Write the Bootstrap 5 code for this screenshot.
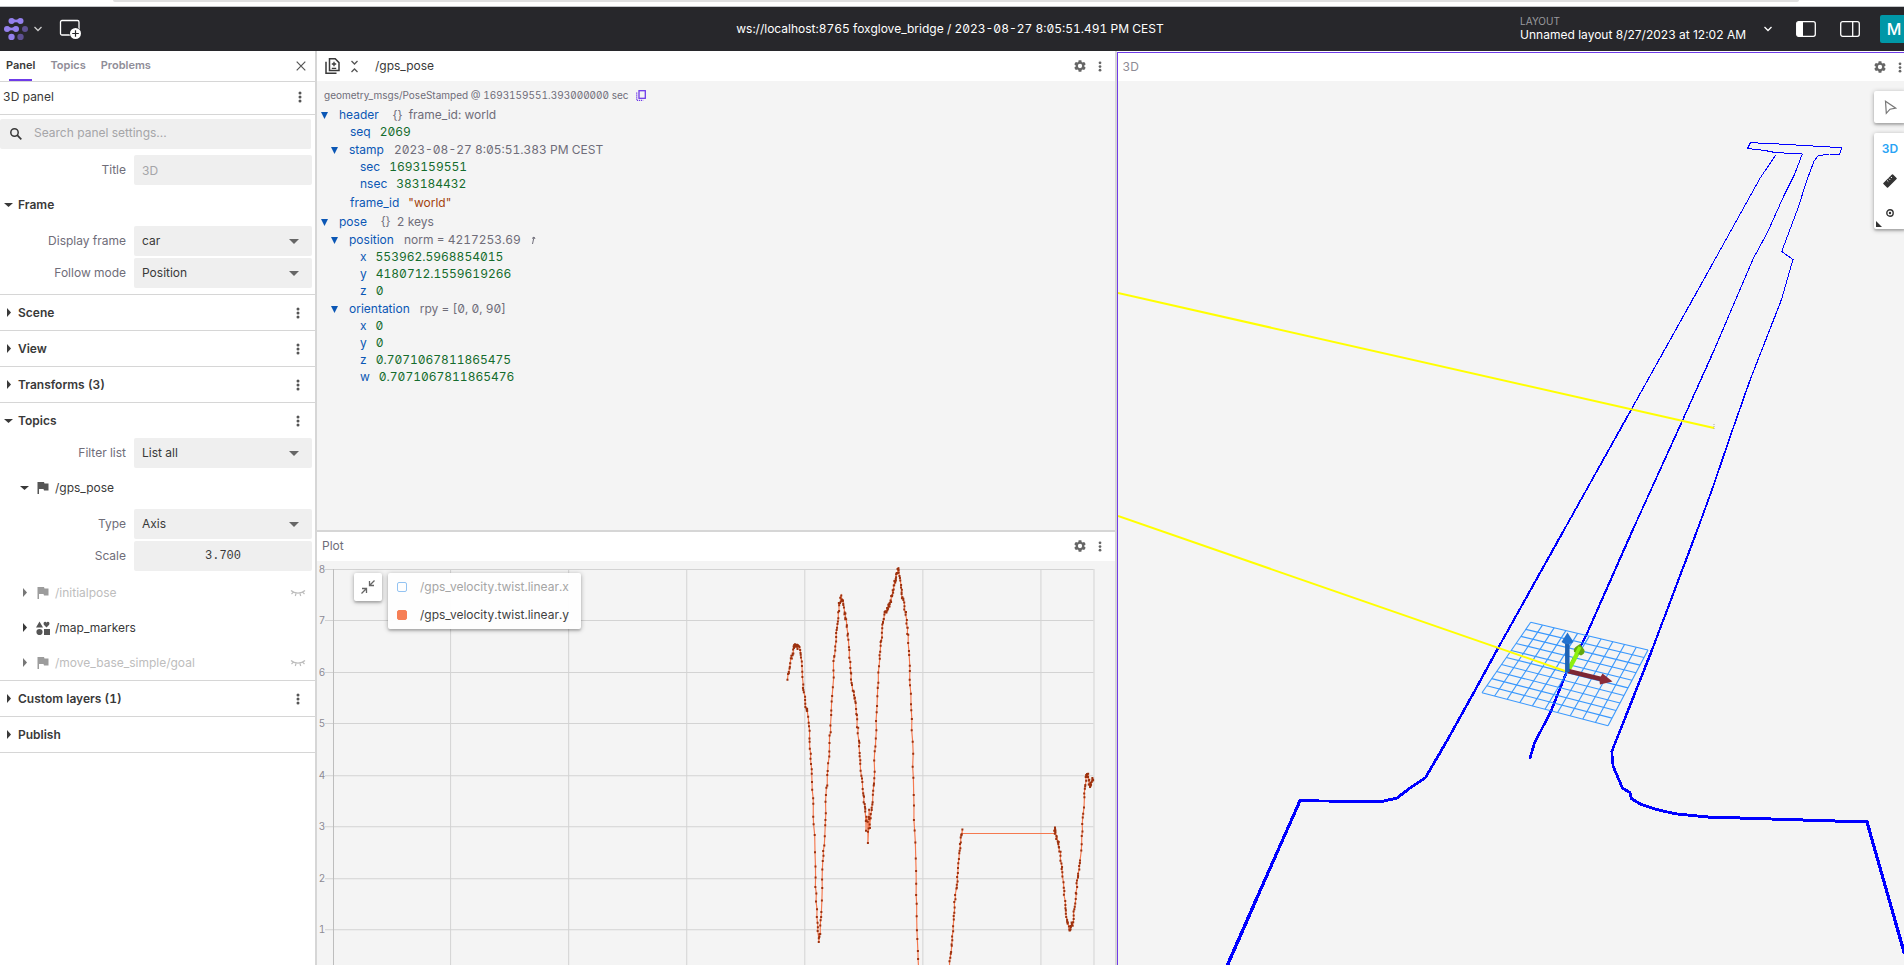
<!DOCTYPE html>
<html lang="en">
<head>
<meta charset="utf-8">
<meta name="viewport" content="width=device-width, initial-scale=1">
<title>Foxglove Studio</title>
<link href="https://cdn.jsdelivr.net/npm/bootstrap@5.3.0/dist/css/bootstrap.min.css" rel="stylesheet">
<style>
  :root { --line: #d6d6d6; --ink: #393939; --dim: #6f6d79; --field: #efefef; --canvas: #f4f4f4; --brand: #6f3be8; }
  html, body { height: 100%; }
  body { font-family: Inter, "Noto Sans", sans-serif; font-size: 12px; line-height: 16px; color: var(--ink); background: #fff; overflow: hidden; font-feature-settings: "cv08", "cv10", "tnum"; }
  svg { display: block; flex: none; }
  button { color: inherit; background: none; border: 0; padding: 0; }
  .zeros { font-feature-settings: "cv08", "cv10", "tnum", "zero"; }
  .fit { min-height: 0; }

  .browser-edge { height: 7px; border-bottom: 1px solid #c4c6c9; padding: 0 105px 0 113px; }
  .browser-edge div { height: 2px; background: #e0e0e0; border-radius: 0 0 6px 6px; }
  .app-header { height: 44px; background: #27272b; color: #fff; padding-right: 4px; overflow: hidden; }
  .app-header .side { flex: 1 1 0; }
  .app-menu { gap: 6px; }
  .layout-caption { font-size: 10px; line-height: 12px; color: #9a9a9e; }
  .layout-pick { gap: 18px; }
  .avatar { width: 28px; height: 28px; margin: 0 -8px 0 20px; background: #0097a7; border-radius: 2px; font-size: 16px; font-weight: 500; }

  .sidebar { width: 317px; border-right: 2px solid var(--line); }
  .side-tabs { height: 31px; border-bottom: 1px solid var(--line); padding: 0 9px 0 6px; gap: 15px; }
  .side-tabs .tab { position: relative; height: 30px; font-size: 11px; font-weight: 600; color: #8f8d98; padding-bottom: 2px; }
  .side-tabs .tab.active { color: var(--ink); }
  .side-tabs .tab.active::after { content: ""; position: absolute; left: 3px; right: 3px; bottom: 0; height: 2px; background: var(--brand); }
  .panel-name { height: 33px; border-bottom: 1px solid var(--line); padding: 0 13px 2px 3px; }
  .dots { color: #555; }
  .field { height: 30px; background-color: var(--field); border: 0; border-radius: 2px; padding: 0 8px; font-size: 12px; line-height: 16px; color: var(--ink); box-shadow: none; }
  .field::placeholder { color: #a5a5a8; opacity: 1; }
  select.field { background: var(--field) url("data:image/svg+xml,%3Csvg xmlns='http://www.w3.org/2000/svg' viewBox='0 0 10 5'%3E%3Cpath fill='%23666' d='M0 0h10L5 5z'/%3E%3C/svg%3E") no-repeat right 13px center / 10px 5px; }
  .field.scale { font-family: "Liberation Mono", monospace; }
  .search { margin: 4px 4px 6px 0; background: var(--field); border-radius: 2px; padding-left: 10px; }
  .search .field { padding-bottom: 3px; }
  .setting { padding-right: 3px; margin-bottom: 2px; gap: 8px; }
  .setting label { width: 126px; text-align: right; color: var(--dim); padding-bottom: 1px; }
  .section { border-bottom: 1px solid var(--line); }
  .section-head { height: 35px; padding: 0 15px 0 4px; gap: 5px; font-weight: 600; }
  .section-head.section { height: 36px; }
  .topic { height: 35px; padding: 0 9px 0 20px; gap: 5px; }
  .topic .ico { width: 14px; margin: 0 0 0 2px; color: #555; }
  .topic.off { color: #bdbdbd; }
  .topic.off .caret { color: #777; }
  .topic.off .ico { color: #9c9c9c; }

  .col-mid { flex: 800 1 0; border-right: 2px solid var(--line); min-width: 0; }
  .col-view { flex: 787 1 0; min-width: 0; margin-top: 1px; border: 1px solid var(--brand); border-width: 1px 0 0 1px; }
  .pane-bar { background: #fff; height: 30px; padding: 0 13px 0 8px; }
  .pane-bar.plot-bar { height: 29px; padding-left: 5px; color: var(--dim); }
  .pane-bar.view-bar { height: 28px; padding: 0 2px 0 4px; color: #8d8b95; }
  .pane-bar .tools { color: #666; gap: 12px; }
  .collapse-all { margin-left: 11px; }
  .pane-topic { margin-left: 17px; }
  .raw { flex: 479 1 0; background: var(--canvas); border-bottom: 2px solid var(--line); overflow: hidden; }
  .plot { flex: 433 1 0; background: var(--canvas); overflow: hidden; }
  .canvas3d { background: var(--canvas); }
  .schema { font-size: 10px; line-height: 16px; padding: 6px 7px 3px; color: var(--dim); gap: 7px; }
  .tree ul { list-style: none; margin: 0; padding-left: 10px; }
  .tree > ul { padding: 0; }
  .tree .node { height: 18px; padding-left: 4px; gap: 10px; color: var(--dim); }
  .tree .twist { margin-right: 1px; color: #0b57b5; }
  .tree .leaf { height: 17px; padding: 0 0 2px 23px; gap: 9px; }
  .tree .leaf.tall { height: 20px; padding-bottom: 1px; }
  .tree .k { color: #0b57b5; }
  .tree .v { color: #156c2d; }
  .tree .s { color: #a3430d; }

  .floating { background: #fff; border-radius: 2px; box-shadow: 0 1px 5px rgba(0,0,0,.3), 0 2px 2px rgba(0,0,0,.14); }
  .legend-wrap { position: absolute; top: 12px; left: 37px; gap: 6px; }
  .legend-wrap button { width: 28px; height: 28px; color: #666; }
  .legend { opacity: .96; }
  .legend .item { height: 28px; padding: 0 12px 0 9px; gap: 13px; }
  .legend .item.off { color: #a2a2a2; }
  .swatch { width: 10px; height: 10px; border: 1px solid #90c2f2; border-radius: 2px; }
  .swatch.on { background: #f77b50; border-color: #f77b50; }
  .axis-text { font-size: 10px; fill: #8d8b95; }
  .view-tools { position: absolute; top: 10px; right: -2px; gap: 10px; }
  .view-tools button { width: 32px; height: 32px; display: flex; align-items: center; justify-content: center; }
  .view-tools .mode { color: #29a3f5; font-weight: 600; }
  .more { position: absolute; left: 2px; bottom: 2px; }
</style>
</head>
<body class="d-flex flex-column">
<svg width="0" height="0" class="position-absolute" aria-hidden="true">
  <symbol id="kebab" viewBox="0 0 4 12"><circle cx="2" cy="2" r="1.5" fill="currentColor"/><circle cx="2" cy="6" r="1.5" fill="currentColor"/><circle cx="2" cy="10" r="1.5" fill="currentColor"/></symbol>
  <symbol id="right" viewBox="0 0 9 9"><path d="M3 0v9l4-4.500z" fill="currentColor"/></symbol>
  <symbol id="down" viewBox="0 0 9 9"><path d="M0 3h9L4.500 7z" fill="currentColor"/></symbol>
  <symbol id="tri" viewBox="0 0 7 8"><path d="M0 1h7L3.500 8z" fill="currentColor"/></symbol>
  <symbol id="flag" viewBox="0 0 14 14"><path d="M1.500 1H8l.5 1.500h4V9.500H8L7.500 8H3v5H1.500z" fill="currentColor"/></symbol>
  <symbol id="shapes" viewBox="0 0 14 14"><path d="M3.500 0.500 7 6.500H0zM10.500 6.500 7.800 3.700Q7 2 8.300 1.100 9.800.4 10.500 1.800 11.200.4 12.800 1.100 14 2 13.200 3.700zM8 8h6v6H8z" fill="currentColor"/><circle cx="3.500" cy="11" r="3.100" fill="currentColor"/></symbol>
  <symbol id="eye" viewBox="0 0 16 8"><path d="M1 1.500c3.500 3.500 10.500 3.500 14 0M3.200 3.300 1.500 5M6 4.500 5.300 7M10 4.500l.7 2.500M12.800 3.300 14.500 5" fill="none" stroke="currentColor" stroke-width="1.200"/></symbol>
  <symbol id="gear" viewBox="2 2 20 20"><path fill="currentColor" d="M19.140 12.940c.04-.3.06-.61.06-.94 0-.32-.02-.64-.07-.94l2.030-1.580c.18-.14.23-.41.12-.61l-1.920-3.320c-.12-.22-.37-.29-.59-.22l-2.390.96c-.5-.38-1.030-.7-1.620-.94l-.36-2.540c-.04-.24-.24-.41-.48-.41h-3.840c-.24 0-.43.17-.47.41l-.36 2.540c-.59.24-1.130.57-1.620.94l-2.390-.96c-.22-.08-.47 0-.59.22L2.740 8.870c-.12.21-.08.47.12.61l2.030 1.580c-.05.3-.09.63-.09.94s.02.64.07.94l-2.030 1.580c-.18.14-.23.41-.12.61l1.920 3.320c.12.22.37.29.59.22l2.390-.96c.5.38 1.030.7 1.620.94l.36 2.540c.05.24.24.41.48.41h3.840c.24 0 .44-.17.47-.41l.36-2.540c.59-.24 1.130-.56 1.620-.94l2.390.96c.22.08.47 0 .59-.22l1.920-3.320c.12-.22.07-.47-.12-.61zM12 15.600a3.600 3.600 0 1 1 0-7.200 3.600 3.600 0 0 1 0 7.200z"/></symbol>
</svg>

<div class="browser-edge flex-shrink-0"><div></div></div>

<header class="app-header d-flex align-items-center flex-shrink-0">
  <div class="side d-flex align-items-center">
    <button class="app-menu d-flex align-items-center ms-1" type="button" aria-label="Menu">
      <svg width="24" height="22" viewBox="0 0 24 22">
        <g fill="#9480ed"><circle cx="7.500" cy="3" r="3"/><circle cx="16.500" cy="3" r="3"/><path d="M8 .3Q12 3 16 .3V5.700Q12 3 8 5.700z"/><circle cx="3" cy="11" r="3"/><circle cx="12" cy="11" r="3"/><path d="M3.500 8.300Q7.500 11 11.500 8.300V13.700Q7.500 11 3.500 13.700z"/><circle cx="7.500" cy="19" r="3.200"/></g>
        <g fill="#5e5092"><circle cx="21" cy="11" r="3"/><circle cx="16.500" cy="19" r="3.200"/></g>
      </svg>
      <svg width="8" height="6" viewBox="0 0 8 6"><path d="M.5 1 4 4.500 7.500 1" fill="none" stroke="#ccc" stroke-width="1.300"/></svg>
    </button>
    <button class="ms-3" type="button" aria-label="Add panel">
      <svg width="24" height="22" viewBox="0 0 24 22"><rect x="2.500" y="2.500" width="18.500" height="14.500" rx="1.500" fill="none" stroke="#fff" stroke-width="1.300"/><circle cx="17.500" cy="15.500" r="6" fill="#27272b"/><circle cx="17.500" cy="15.500" r="5.500" fill="#fff"/><path d="M17.500 12.200v6.600M14.200 15.500h6.600" stroke="#27272b" stroke-width="1.200"/></svg>
    </button>
  </div>
  <div class="zeros text-nowrap">ws://localhost:8765 foxglove_bridge / 2023-08-27 8:05:51.491 PM CEST</div>
  <div class="side d-flex align-items-center justify-content-end">
    <button class="layout-pick d-flex align-items-center text-start me-4" type="button">
      <span><span class="layout-caption d-block">LAYOUT</span><span class="d-block text-nowrap">Unnamed layout 8/27/2023 at 12:02 AM</span></span>
      <svg width="8" height="6" viewBox="0 0 8 6"><path d="M.5 1 4 4.500 7.500 1" fill="none" stroke="#fff" stroke-width="1.300"/></svg>
    </button>
    <button class="me-4" type="button" aria-label="Left sidebar"><svg width="20" height="16" viewBox="0 0 20 16"><rect x=".7" y=".7" width="18.600" height="14.600" rx="2" fill="none" stroke="#fff" stroke-width="1.300"/><path d="M2 .7h5v14.600H2L.7 14V2z" fill="#fff"/></svg></button>
    <button type="button" aria-label="Right sidebar"><svg width="20" height="16" viewBox="0 0 20 16"><rect x=".7" y=".7" width="18.600" height="14.600" rx="2" fill="none" stroke="#fff" stroke-width="1.300"/><path d="M12.700 1v14" stroke="#fff" stroke-width="1.300"/></svg></button>
    <button class="avatar" type="button">M</button>
  </div>
</header>

<main class="fit d-flex flex-fill">
  <aside class="sidebar flex-shrink-0">
    <div class="side-tabs d-flex align-items-center">
      <button class="tab active" type="button">Panel</button>
      <button class="tab" type="button">Topics</button>
      <button class="tab" type="button">Problems</button>
      <button class="ms-auto" type="button" aria-label="Close"><svg width="10" height="10" viewBox="0 0 10 10"><path d="M.7.7l8.600 8.600M9.300.7.7 9.300" stroke="#555" stroke-width="1.200"/></svg></button>
    </div>
    <div class="panel-name d-flex align-items-center justify-content-between">
      <span>3D panel</span>
      <button class="dots" type="button" aria-label="Panel menu"><svg width="4" height="12"><use href="#kebab"/></svg></button>
    </div>
    <div class="search d-flex align-items-center">
      <svg width="12" height="12" viewBox="0 0 12 12"><circle cx="4.500" cy="4.500" r="3.700" fill="none" stroke="#393939" stroke-width="1.500"/><path d="M7.200 7.200 11.300 11.300" stroke="#393939" stroke-width="1.700"/></svg>
      <input class="field form-control ps-2 ms-1" type="text" aria-label="Search panel settings" placeholder="Search panel settings...">
    </div>
    <div class="setting d-flex align-items-center"><label class="flex-shrink-0" for="f-title">Title</label><input id="f-title" class="field form-control" type="text" placeholder="3D"></div>

    <section class="section pb-1">
      <div class="section-head d-flex align-items-center mb-1"><svg width="9" height="9"><use href="#down"/></svg>Frame</div>
      <div class="setting d-flex align-items-center"><label class="flex-shrink-0" for="f-frame">Display frame</label><select id="f-frame" class="field form-select"><option>car</option></select></div>
      <div class="setting d-flex align-items-center"><label class="flex-shrink-0" for="f-follow">Follow mode</label><select id="f-follow" class="field form-select"><option>Position</option></select></div>
    </section>
    <section class="section section-head d-flex align-items-center"><svg width="9" height="9"><use href="#right"/></svg>Scene<button class="dots ms-auto" type="button" aria-label="Scene menu"><svg width="4" height="12"><use href="#kebab"/></svg></button></section>
    <section class="section section-head d-flex align-items-center"><svg width="9" height="9"><use href="#right"/></svg>View<button class="dots ms-auto" type="button" aria-label="View menu"><svg width="4" height="12"><use href="#kebab"/></svg></button></section>
    <section class="section section-head d-flex align-items-center"><svg width="9" height="9"><use href="#right"/></svg>Transforms (3)<button class="dots ms-auto" type="button" aria-label="Transforms menu"><svg width="4" height="12"><use href="#kebab"/></svg></button></section>
    <section class="section">
      <div class="section-head d-flex align-items-center"><svg width="9" height="9"><use href="#down"/></svg>Topics<button class="dots ms-auto" type="button" aria-label="Topics menu"><svg width="4" height="12"><use href="#kebab"/></svg></button></div>
      <div class="setting d-flex align-items-center"><label class="flex-shrink-0" for="f-filter">Filter list</label><select id="f-filter" class="field form-select"><option>List all</option></select></div>
      <div class="topic d-flex align-items-center"><svg class="caret" width="9" height="9"><use href="#down"/></svg><svg class="ico" height="14"><use href="#flag"/></svg>/gps_pose</div>
      <div class="setting d-flex align-items-center mt-1"><label class="flex-shrink-0" for="f-type">Type</label><select id="f-type" class="field form-select"><option>Axis</option></select></div>
      <div class="setting d-flex align-items-center"><label class="flex-shrink-0" for="f-scale">Scale</label><input id="f-scale" class="field scale form-control text-center" type="text" value="3.700"></div>
      <div class="topic off d-flex align-items-center mt-1"><svg class="caret" width="9" height="9"><use href="#right"/></svg><svg class="ico" height="14"><use href="#flag"/></svg>/initialpose<svg class="ms-auto" width="16" height="8"><use href="#eye"/></svg></div>
      <div class="topic d-flex align-items-center"><svg class="caret" width="9" height="9"><use href="#right"/></svg><svg class="ico" height="14"><use href="#shapes"/></svg>/map_markers</div>
      <div class="topic off d-flex align-items-center"><svg class="caret" width="9" height="9"><use href="#right"/></svg><svg class="ico" height="14"><use href="#flag"/></svg>/move_base_simple/goal<svg class="ms-auto" width="16" height="8"><use href="#eye"/></svg></div>
    </section>
    <section class="section section-head d-flex align-items-center"><svg width="9" height="9"><use href="#right"/></svg>Custom layers (1)<button class="dots ms-auto" type="button" aria-label="Custom layers menu"><svg width="4" height="12"><use href="#kebab"/></svg></button></section>
    <section class="section section-head d-flex align-items-center"><svg width="9" height="9"><use href="#right"/></svg>Publish</section>
  </aside>

  <div class="col-mid d-flex flex-column">
    <section class="raw">
      <div class="pane-bar d-flex align-items-center">
        <button type="button" aria-label="Diff"><svg width="15" height="16" viewBox="0 0 15 16"><path d="M4.500.8h5.700L14 4.600V12.500H4.500zM1 3.800v11.400h10.500" fill="none" stroke="#393939" stroke-width="1.500"/><path d="M9 3.800v4.400M6.800 6h4.400M6.800 10.300h4.400" stroke="#393939" stroke-width="1.300"/></svg></button>
        <button class="collapse-all" type="button" aria-label="Collapse all"><svg width="7" height="13" viewBox="0 0 7 13"><path d="M.5 1 3.500 4l3-3M.5 12l3-3 3 3" fill="none" stroke="#555" stroke-width="1.300"/></svg></button>
        <span class="pane-topic">/gps_pose</span>
        <div class="tools d-flex align-items-center ms-auto"><button type="button" aria-label="Settings"><svg width="12" height="12"><use href="#gear"/></svg></button><button type="button" aria-label="Menu"><svg width="4" height="11"><use href="#kebab"/></svg></button></div>
      </div>
      <div class="schema zeros d-flex align-items-center"><span>geometry_msgs/PoseStamped @ 1693159551.393000000 sec</span>
        <button type="button" aria-label="Copy"><svg width="10" height="11" viewBox="0 0 10 11"><rect x="3" y=".7" width="6.300" height="7.600" fill="none" stroke="#6f3be8" stroke-width="1.300"/><path d="M.7 2.500v7.800h6.500" fill="none" stroke="#6f3be8" stroke-width="1.200" stroke-dasharray="1.200 .8"/></svg></button>
      </div>
      <div class="tree zeros">
        <ul>
          <li><div class="node d-flex align-items-center"><svg class="twist" width="7" height="8"><use href="#tri"/></svg><span class="k me-1">header</span><span>{}&nbsp; frame_id: world</span></div>
            <ul>
              <li class="leaf d-flex align-items-center"><span class="k">seq</span><span class="v">2069</span></li>
              <li><div class="node d-flex align-items-center"><svg class="twist" width="7" height="8"><use href="#tri"/></svg><span class="k">stamp</span><span>2023-08-27 8:05:51.383 PM CEST</span></div>
                <ul>
                  <li class="leaf d-flex align-items-center"><span class="k">sec</span><span class="v">1693159551</span></li>
                  <li class="leaf d-flex align-items-center"><span class="k">nsec</span><span class="v">383184432</span></li>
                </ul></li>
              <li class="leaf tall d-flex align-items-center"><span class="k">frame_id</span><span class="s">"world"</span></li>
            </ul></li>
          <li><div class="node d-flex align-items-center"><svg class="twist" width="7" height="8"><use href="#tri"/></svg><span class="k me-1">pose</span><span>{}&nbsp; 2 keys</span></div>
            <ul>
              <li><div class="node d-flex align-items-center"><svg class="twist" width="7" height="8"><use href="#tri"/></svg><span class="k">position</span><span>norm = 4217253.69</span><svg width="5" height="8" viewBox="0 0 5 8"><path d="M1.500 8 3 1M1 2.500 3 1l1 2" fill="none" stroke="currentColor"/></svg></div>
                <ul>
                  <li class="leaf d-flex align-items-center"><span class="k">x</span><span class="v">553962.5968854015</span></li>
                  <li class="leaf d-flex align-items-center"><span class="k">y</span><span class="v">4180712.1559619266</span></li>
                  <li class="leaf d-flex align-items-center"><span class="k">z</span><span class="v">0</span></li>
                </ul></li>
              <li><div class="node d-flex align-items-center"><svg class="twist" width="7" height="8"><use href="#tri"/></svg><span class="k">orientation</span><span>rpy = [0, 0, 90]</span></div>
                <ul>
                  <li class="leaf d-flex align-items-center"><span class="k">x</span><span class="v">0</span></li>
                  <li class="leaf d-flex align-items-center"><span class="k">y</span><span class="v">0</span></li>
                  <li class="leaf d-flex align-items-center"><span class="k">z</span><span class="v">0.7071067811865475</span></li>
                  <li class="leaf d-flex align-items-center"><span class="k">w</span><span class="v">0.7071067811865476</span></li>
                </ul></li>
            </ul></li>
        </ul>
      </div>
    </section>

    <section class="plot d-flex flex-column">
      <div class="pane-bar plot-bar d-flex align-items-center">
        <span>Plot</span>
        <div class="tools d-flex align-items-center ms-auto"><button type="button" aria-label="Settings"><svg width="12" height="12"><use href="#gear"/></svg></button><button type="button" aria-label="Menu"><svg width="4" height="11"><use href="#kebab"/></svg></button></div>
      </div>
      <div class="fit position-relative flex-fill">
        <svg id="chart" width="100%" height="100%" viewBox="317 561 798 404" preserveAspectRatio="xMinYMin slice"></svg>
        <div class="legend-wrap d-flex align-items-start">
          <button class="floating d-flex align-items-center justify-content-center" type="button" aria-label="Hide legend"><svg width="14" height="14" viewBox="0 0 14 14"><path d="M13.500.5 8.500 5.500M8.500 1v4.500H13M.5 13.500l5-5M1 8.500h4.500V13" fill="none" stroke="currentColor" stroke-width="1.300"/></svg></button>
          <div class="legend floating">
            <div class="item off d-flex align-items-center"><span class="swatch"></span>/gps_velocity.twist.linear.x</div>
            <div class="item d-flex align-items-center"><span class="swatch on"></span>/gps_velocity.twist.linear.y</div>
          </div>
        </div>
      </div>
    </section>
  </div>

  <section class="col-view d-flex flex-column">
    <div class="pane-bar view-bar d-flex align-items-center">
      <span>3D</span>
      <div class="tools d-flex align-items-center ms-auto"><button type="button" aria-label="Settings"><svg width="12" height="12"><use href="#gear"/></svg></button><button type="button" aria-label="Menu"><svg width="4" height="11"><use href="#kebab"/></svg></button></div>
    </div>
    <div class="canvas3d fit position-relative flex-fill overflow-hidden">
      <svg id="scene" width="100%" height="100%" viewBox="1118 81 786 884" preserveAspectRatio="xMinYMin slice">
        <g id="lanes" fill="none" stroke="#00f" stroke-linecap="round" stroke-linejoin="round" shape-rendering="crispEdges"></g>
        <g id="ground" stroke="#248eff" stroke-width="1.100" opacity=".9"></g>
        <g stroke="#ff0" stroke-width="2"><path d="M1118 293 1714 428M1118 516 1565 671"/><path d="M1714 424v5" stroke="#aaa89a" stroke-width="1" stroke-dasharray="1 1"/></g>
        <path d="M1569 669 1577 654" stroke="#8df010" stroke-width="4.500"/><path d="M1580 644 1584.500 650Q1585 654 1581 655.500L1574 652Q1573 648 1577 646z" fill="#62a80c"/><path d="M1576 654.500 1580 647" stroke="#8df010" stroke-width="3.500"/>
        <path d="M1568 671 1601 679" stroke="#7d2632" stroke-width="4.500"/><path d="M1602.500 673.500 1612.500 681.500 1600 684.500Q1598.500 679 1602.500 673.500z" fill="#8c2b38"/>
        <path d="M1567.300 672V642" stroke="#1d62b4" stroke-width="4.500"/><path d="M1567.500 632.500 1573.500 642Q1567.500 646.500 1561.500 642z" fill="#2272cf"/>
      </svg>
      <div class="view-tools d-flex flex-column">
        <div class="floating"><button type="button" aria-label="Select"><svg width="13" height="15" viewBox="0 0 13 15"><path d="M1.500 1.200 11.800 8.200 6 9.200 2.300 13.300z" fill="none" stroke="#777" stroke-width="1.200"/></svg></button></div>
        <div class="floating position-relative">
          <button class="mode" type="button">3D</button>
          <button type="button" aria-label="Measure"><svg width="14" height="14" viewBox="0 0 14 14"><path d="M9.500 1 13 4.500 4.500 13 1 9.500z" fill="#333" stroke="#333" stroke-width="1.600" stroke-linejoin="round"/><path d="M4.200 6.500 5.300 7.600M6 4.700l1.100 1.100M7.800 2.900 8.900 4" stroke="#fff"/></svg></button>
          <button type="button" aria-label="Publish point"><svg width="8" height="8" viewBox="0 0 8 8"><circle cx="4" cy="4" r="3.200" fill="none" stroke="#333" stroke-width="1.400"/><circle cx="4" cy="4" r="1.200" fill="#333"/></svg></button>
          <svg class="more" width="6" height="6" viewBox="0 0 6 6"><path d="M0 0v6h6z" fill="#333"/></svg>
        </div>
      </div>
    </div>
  </section>
</main>

<script>
  const NS = "http://www.w3.org/2000/svg";
  function add(parent, tag, attrs, text) {
    const el = document.createElementNS(NS, tag);
    for (const k in attrs) el.setAttribute(k, attrs[k]);
    if (text) el.textContent = text;
    parent.appendChild(el);
    return el;
  }

  // Road lanes; strokes get thicker towards the camera.
  const lanes = document.getElementById("lanes");
  [
    [[1747.5,148.5],[1750.5,142.7],[1774,143.7],[1808,145.7],[1842,147.7],[1839.5,154.3],[1829,154],[1818,156],[1814,161],[1807,180],[1798,208],[1781.7,251.5],[1793,259.5],[1781.7,299],[1749.7,381],[1730,437],[1713,487],[1697.3,530],[1652,650],[1611.8,751.5],[1613,766],[1622.4,788],[1630,792.7],[1631.5,798.7],[1639.6,803.7],[1655,809],[1674.6,813.7],[1707.5,817],[1867,822],[1904,952]],
    [[1747.5,148.5],[1765,150.5],[1775,152.5],[1802.3,154],[1794.3,175],[1783.3,197],[1767.7,232],[1753.3,258.5],[1713.3,352],[1682.7,420],[1632.7,530],[1585.4,637],[1566.8,671.5],[1551,711],[1534.3,743.5],[1530,758]],
    [[1775.7,155],[1760,178.3],[1713,263],[1631,410],[1564,530],[1498.4,647.5],[1473.8,692.5],[1446,742.5],[1425.2,778],[1410,788],[1397,798],[1381.7,801.5],[1322,801],[1300,800.7],[1256,900],[1227.5,965]]
  ].forEach(function (pts) {
    for (let i = 1; i < pts.length; i++) {
      const a = pts[i - 1], b = pts[i], y = (a[1] + b[1]) / 2;
      add(lanes, "path", { d: "M" + a + "L" + b, "stroke-width": (y < 300 ? 1 : 1.1 + (y - 300) / 280).toFixed(1) });
    }
  });

  // Ground grid, 10 by 10 cells.
  const ground = document.getElementById("ground");
  const tl = [1530.7, 622.3], tr = [1648, 650], br = [1608, 725.7], bl = [1482, 692.7];
  const mix = (a, b, t) => [a[0] + (b[0] - a[0]) * t, a[1] + (b[1] - a[1]) * t];
  for (let i = 0; i <= 10; i++) {
    const t = i / 10;
    add(ground, "path", { d: "M" + mix(tl, tr, t) + "L" + mix(bl, br, t) });
    add(ground, "path", { d: "M" + mix(tl, bl, t) + "L" + mix(tr, br, t) });
  }

  // Plot.
  const chart = document.getElementById("chart");
  for (let i = 0; i < 8; i++) {
    const y = Math.floor(569 + i * 51.5) + .5;
    add(chart, "path", { d: "M325 " + y + "H1093", stroke: "#d3d3d3" });
    add(chart, "text", { x: 322, y: y + 3, "text-anchor": "middle", class: "axis-text" }, String(8 - i));
  }
  [450.5, 568.5, 686.5, 804.5, 922.5, 1040.5, 1093.5].forEach(x => add(chart, "path", { d: "M" + x + " 569V965", stroke: "#d3d3d3" }));
  add(chart, "path", { d: "M333.5 569V965", stroke: "#bdbdbd" });

  const series = [
    [143,413,147,385,152,355,158,335,163,313,170,322,176,318,182,350,188,428,194,485,202,520,208,590,213,665,217,745,221,850,225,1013,228,1085,231,1150,235,1200,239,1175,243,1115,247,985,251,910,257,790,263,690,269,590,275,490,281,370,286,300,291,250,296,195,302,172,307,185,313,220,319,250,325,320,331,395,337,450,345,490,351,555,357,625,362,690,369,765,376,820,378,870,380,825,383,903,386,810,388,860,391,825,396,780,401,715,406,590,411,470,417,355,423,300,428,250,434,220,442,205,452,180,460,140,467,110,474,86,480,120,485,165,492,195,498,240,503,290,508,390,513,510,517,640,521,800,526,990,531,1170,535,1290],
    [626,1290,632,1230,637,1170,642,1100,648,1040,654,985,659,920,663,890,666,868],
    [942,880,943,865,950,895,960,945,967,1010,973,1080,980,1140,988,1172,996,1150,1004,1090,1012,1010,1020,960,1026,850,1032,760,1037,715,1041,700,1045,725,1050,740,1054,715,1058,720]
  ];
  let seed = 7;
  const rnd = () => (seed = (seed * 16807) % 2147483647) / 2147483647 - .5;
  let line = "", dots = "";
  series.forEach(function (s, n) {
    const pts = [];
    for (let i = 0; i + 3 < s.length; i += 2) {
      const steps = Math.max(2, Math.round((s[i + 2] - s[i]) / 1.1));
      for (let k = 0; k < steps; k++) {
        const t = k / steps;
        pts.push([s[i] + (s[i + 2] - s[i]) * t + rnd() * 3, s[i + 1] + (s[i + 3] - s[i + 1]) * t + rnd() * 14]);
      }
    }
    pts.push(s.slice(-2));
    if (n === 2) line += "L942 880";
    pts.forEach(function (p, i) {
      line += (i || n === 2 ? "L" : "M") + p[0].toFixed(1) + " " + p[1].toFixed(1);
      dots += "M" + (p[0] - 3).toFixed(1) + " " + p[1].toFixed(1) + "h6";
    });
    if (n === 1) line += "L665 880";
  });
  const plot = add(chart, "g", { transform: "translate(740 540) scale(.33333)", fill: "none" });
  add(plot, "path", { d: line, stroke: "#f5794f", "stroke-width": 3.5 });
  add(plot, "path", { d: dots, stroke: "#9c310e", "stroke-width": 6 });
</script>
<script src="https://cdn.jsdelivr.net/npm/bootstrap@5.3.0/dist/js/bootstrap.bundle.min.js"></script>
</body>
</html>
